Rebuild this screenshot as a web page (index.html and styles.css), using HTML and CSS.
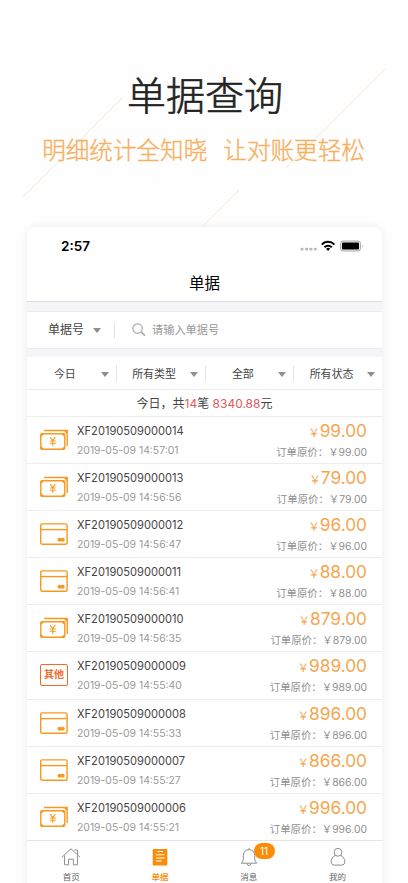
FILE: index.html
```html
<!DOCTYPE html>
<html lang="zh-CN">
  <head>
    <meta charset="UTF-8" />
    <meta name="viewport" content="width=device-width, initial-scale=1.0" />
    <title>单据查询</title>
    <link rel="stylesheet" href="styles.css">
  </head>
  <body>
    <!-- shared icons -->
    <svg class="sprite" width="0" height="0">
      <symbol id="cash" viewBox="0 0 28 22">
        <g fill="none" stroke="#f7991f" stroke-width="1.4">
          <rect x="0.8" y="4.7" width="24" height="15.6" rx="1" />
          <path d="M4 1.500h23.200v15.500" />
          <path d="M10.200 8.200l2.600 3.400 2.600-3.400M12.800 11.500v5.400M9.800 12h6M9.800 14.200h6" stroke-width="1.1" />
        </g>
        <path d="M1 5h3l-3 3zM24.5 5h-3l3 3zM1 20h3l-3-3zM24.5 20h-3l3-3zM24 2h3v3z" fill="#f7991f" />
      </symbol>
      <symbol id="card" viewBox="0 0 28 22">
        <g fill="none" stroke="#f7991f" stroke-width="1.4">
          <rect x="0.7" y="0.9" width="26.4" height="20.4" rx="1.5" />
          <path d="M1 6.6h26" />
        </g>
        <circle cx="19.5" cy="16.7" r="2" fill="#f7991f" />
        <circle cx="22.7" cy="16.7" r="2" fill="#f7991f" />
      </symbol>
    </svg>

    <header class="intro">
      <svg class="intro-lines" width="408" height="230" viewBox="0 0 408 230" fill="none" stroke="#f8e5d2">
        <path d="M23 197L122 98M286 168L385 69M202 227L239 190" />
      </svg>
      <h1>单据查询</h1>
      <p>明细统计全知晓<span>让对账更轻松</span></p>
    </header>

    <main class="phone">
      <div class="status">
        <span class="time">2:57</span>
        <svg class="signals" width="64" height="12" viewBox="0 0 64 12">
          <g fill="#bbb">
            <rect x="0.5" y="7.8" width="3" height="2.6" rx="1" /><rect x="5" y="7.8" width="3" height="2.6" rx="1" />
            <rect x="9.4" y="7.8" width="3" height="2.6" rx="1" /><rect x="13.7" y="7.8" width="3" height="2.6" rx="1" />
          </g>
          <g fill="none" stroke="#000" stroke-width="2">
            <path d="M21.8 4.6a8.6 8.6 0 0 1 12.6 0" />
            <path d="M24.4 7.3a5.2 5.2 0 0 1 7.4 0" />
          </g>
          <path d="M26 8.8a3 3 0 0 1 4.2 0L28.1 11z" />
          <rect x="40.5" y="1" width="20" height="10" rx="2.5" fill="#eee" stroke="#aaa" />
          <rect x="42" y="2.4" width="17" height="7.2" rx="1" />
          <path d="M62 4.4q1.2 1.6 0 3.2z" fill="#777" />
        </svg>
      </div>
      <h2>单据</h2>

      <div class="search">
        <span class="search-type">单据号</span>
        <i class="arrow"></i>
        <i class="divider"></i>
        <svg width="14" height="14" viewBox="0 0 14 14" fill="none" stroke="#aaa">
          <circle cx="5.6" cy="5.6" r="4.7" stroke-width="1.2" />
          <path d="M9.2 9.2l3.8 3.4" stroke-width="1.7" />
        </svg>
        <span class="hint">请输入单据号</span>
      </div>

      <div class="filters">
        <div class="filter"><span>今日</span><i class="arrow"></i></div>
        <div class="filter"><span>所有类型</span><i class="arrow"></i></div>
        <div class="filter"><span>全部</span><i class="arrow"></i></div>
        <div class="filter"><span>所有状态</span><i class="arrow"></i></div>
      </div>

      <div class="summary">今日，共<b>14</b>笔 <b>8340.88</b>元</div>

      <ul class="orders">
        <li>
          <svg class="icon"><use href="#cash" /></svg>
          <div class="info"><strong>XF20190509000014</strong><small>2019-05-09 14:57:01</small></div>
          <div class="money"><em><i>￥</i>99.00</em><small>订单原价：￥99.00</small></div>
        </li>
        <li>
          <svg class="icon"><use href="#cash" /></svg>
          <div class="info"><strong>XF20190509000013</strong><small>2019-05-09 14:56:56</small></div>
          <div class="money"><em><i>￥</i>79.00</em><small>订单原价：￥79.00</small></div>
        </li>
        <li>
          <svg class="icon"><use href="#card" /></svg>
          <div class="info"><strong>XF20190509000012</strong><small>2019-05-09 14:56:47</small></div>
          <div class="money"><em><i>￥</i>96.00</em><small>订单原价：￥96.00</small></div>
        </li>
        <li>
          <svg class="icon"><use href="#card" /></svg>
          <div class="info"><strong>XF20190509000011</strong><small>2019-05-09 14:56:41</small></div>
          <div class="money"><em><i>￥</i>88.00</em><small>订单原价：￥88.00</small></div>
        </li>
        <li>
          <svg class="icon"><use href="#cash" /></svg>
          <div class="info"><strong>XF20190509000010</strong><small>2019-05-09 14:56:35</small></div>
          <div class="money"><em><i>￥</i>879.00</em><small>订单原价：￥879.00</small></div>
        </li>
        <li>
          <span class="icon other">其他</span>
          <div class="info"><strong>XF20190509000009</strong><small>2019-05-09 14:55:40</small></div>
          <div class="money"><em><i>￥</i>989.00</em><small>订单原价：￥989.00</small></div>
        </li>
        <li>
          <svg class="icon"><use href="#card" /></svg>
          <div class="info"><strong>XF20190509000008</strong><small>2019-05-09 14:55:33</small></div>
          <div class="money"><em><i>￥</i>896.00</em><small>订单原价：￥896.00</small></div>
        </li>
        <li>
          <svg class="icon"><use href="#card" /></svg>
          <div class="info"><strong>XF20190509000007</strong><small>2019-05-09 14:55:27</small></div>
          <div class="money"><em><i>￥</i>866.00</em><small>订单原价：￥866.00</small></div>
        </li>
        <li>
          <svg class="icon"><use href="#cash" /></svg>
          <div class="info"><strong>XF20190509000006</strong><small>2019-05-09 14:55:21</small></div>
          <div class="money"><em><i>￥</i>996.00</em><small>订单原价：￥996.00</small></div>
        </li>
      </ul>

      <nav class="tabs">
        <div class="tab">
          <svg width="20" height="20" viewBox="0 0 20 20" fill="none" stroke="#8c8c8c" stroke-linejoin="round">
            <path d="M1 10.2L10 1.8l9 8.4M13.5 3h3v4.5M3.6 8.5v9.3h4v-5.6h4.8v5.6h4V8.5" />
          </svg>
          <span>首页</span>
        </div>
        <div class="tab active">
          <svg width="20" height="20" viewBox="0 0 20 20">
            <rect x="2.7" y="2" width="14.6" height="16.6" rx="1.2" fill="#fb8c08" />
            <path d="M7.5 4.5h5.5M5.8 7.7h8.7M5.8 11h8.7M5.8 14h6" stroke="#fff" stroke-width="1.1" />
          </svg>
          <span>单据</span>
        </div>
        <div class="tab">
          <svg width="20" height="20" viewBox="0 0 20 20" fill="none" stroke="#8c8c8c">
            <path d="M10 1v1.6M2.3 16.2h15.4q-2-1.6-2-4.2V8.6C15.7 5 13.5 2.7 10 2.7S4.3 5 4.3 8.6V12q0 2.6-2 4.2zM8 16.5q.3 2 2 2t2-2" />
          </svg>
          <b class="badge">11</b>
          <span>消息</span>
        </div>
        <div class="tab">
          <svg width="20" height="20" viewBox="0 0 20 20" fill="none" stroke="#8c8c8c">
            <circle cx="10" cy="5.3" r="3.9" />
            <path d="M7.3 8.4C4.8 9.7 3.2 12 3.2 14.6c0 2.500 1.100 3.500 3.200 3.500h7.200c2.100 0 3.200-1 3.200-3.500 0-2.600-1.600-4.900-4.100-6.200" />
          </svg>
          <span>我的</span>
        </div>
      </nav>
    </main>
  </body>
</html>
```
FILE: styles.css
```css
* {
  box-sizing: border-box;
}
body {
  margin: 0;
  width: 408px;
  height: 883px;
  overflow: hidden;
  background: #fefefe;
  color: #444;
  font-family: Inter, "Noto Sans CJK SC", sans-serif;
}
h1, h2, p, ul {
  margin: 0;
  padding: 0;
}
i, em {
  font-style: normal;
}
.sprite {
  position: absolute;
}
.intro {
  position: relative;
  height: 227px;
  padding-top: 68px;
  text-align: center;
}
.intro-lines {
  position: absolute;
  left: 0;
  top: 0;
}
.intro h1 {
  position: relative;
  font-size: 39px;
  font-weight: 300;
  line-height: 56px;
  padding-left: 2px;
  color: #222;
  -webkit-text-stroke: 0.6px #222;
}
.intro p {
  position: relative;
  font-size: 23.6px;
  font-weight: 300;
  line-height: 34px;
  margin-top: 10px;
  padding-right: 1px;
  color: #f7b061;
  -webkit-text-stroke: 0.35px #f7b061;
  white-space: nowrap;
}
.intro p span {
  margin-left: 16px;
}
.phone {
  width: 355px;
  height: 670px;
  margin-left: 27px;
  background: #fff;
  border-radius: 9px 9px 0 0;
  box-shadow: 0 0 10px rgba(0, 0, 0, 0.08);
}
.status {
  display: flex;
  justify-content: space-between;
  align-items: center;
  height: 38px;
  padding: 0 18px 0 34px;
}
.time {
  font-size: 13.5px;
  font-weight: 600;
  color: #000;
}
.phone h2 {
  height: 37px;
  line-height: 37px;
  border-bottom: 1px solid #dedee2;
  text-align: center;
  font-size: 15.5px;
  font-weight: 400;
  color: #000;
}
.search {
  display: flex;
  align-items: center;
  height: 55px;
  border-top: 9px solid #f4f4f9;
  border-bottom: 8px solid #f4f4f9;
  padding-left: 21px;
  font-size: 12px;
  box-shadow: inset 0 1px #ebebf0, inset 0 -1px #ebebf0;
}
.search span {
  margin-top: -3px;
}
.arrow {
  border: 4px solid transparent;
  border-top: 5px solid #8e8e8e;
  border-bottom: 0;
}
.search .arrow {
  margin-left: 9px;
}
.divider {
  width: 1px;
  height: 17px;
  margin-left: 13px;
  background: #e3e3e3;
}
.search svg {
  margin-left: 17px;
}
.search-type {
  width: 36px;
}
.hint {
  margin-left: 6px;
  font-size: 11.2px;
  color: #999;
}
.filters {
  display: grid;
  grid-template-columns: repeat(4, 1fr);
  align-items: center;
  height: 33px;
  border-bottom: 1px solid #ededed;
}
.filter {
  display: flex;
  align-items: center;
  height: 17px;
  padding-right: 7px;
  font-size: 11px;
}
.filter + .filter {
  border-left: 1px solid #e6e6e6;
}
.filter span {
  flex: 1;
  padding-left: 2px;
  text-align: center;
}
.filter .arrow {
  margin-top: 3px;
}
.summary {
  height: 27px;
  line-height: 28px;
  border-bottom: 1px solid #ededed;
  text-align: center;
  font-size: 12px;
}
.summary b {
  font-weight: 400;
  color: #e2595e;
}
.orders {
  list-style: none;
}
.orders li {
  display: flex;
  height: 47.1px;
  padding: 0 15px 0 13px;
  border-bottom: 1px solid #ededed;
}
.icon {
  width: 28px;
  height: 22px;
  margin-top: 12px;
}
.other {
  border: 1.5px solid #f26a27;
  border-radius: 2px;
  color: #f26a27;
  font-size: 10px;
  font-weight: 700;
  line-height: 19px;
  text-align: center;
}
.info, .money {
  display: flex;
  flex-direction: column;
}
.info {
  flex: 1;
  margin-left: 9px;
}
.info strong {
  margin-top: 6px;
  font-size: 11.1px;
  font-weight: 400;
  line-height: 16px;
}
.info small {
  margin-top: 4px;
  font-size: 10.4px;
  line-height: 15px;
  color: #999;
}
.money {
  align-items: flex-end;
}
.money em {
  margin-top: 3px;
  font-size: 17.3px;
  line-height: 22px;
  color: #f5a650;
}
.money em i {
  font-size: 11.5px;
}
.money small {
  margin-top: 1px;
  font-size: 10.4px;
  line-height: 15px;
  color: #8f8f8f;
}
.tabs {
  display: grid;
  grid-template-columns: repeat(4, 1fr);
  height: 43px;
  border-top: 1px solid #e4e4e4;
  margin-top: -1px;
}
.tab {
  position: relative;
  display: flex;
  flex-direction: column;
  align-items: center;
  padding-top: 6px;
  font-size: 8.5px;
  line-height: 12px;
  color: #666;
}
.tab span {
  margin-top: 4px;
}
.active {
  color: #fb8c08;
  font-weight: 500;
}
.badge {
  position: absolute;
  left: 49px;
  top: 2px;
  width: 21px;
  height: 16px;
  border-radius: 8px;
  background: #fb8c08;
  color: #fff;
  font-size: 10px;
  font-weight: 400;
  line-height: 16px;
  text-align: center;
}
```
